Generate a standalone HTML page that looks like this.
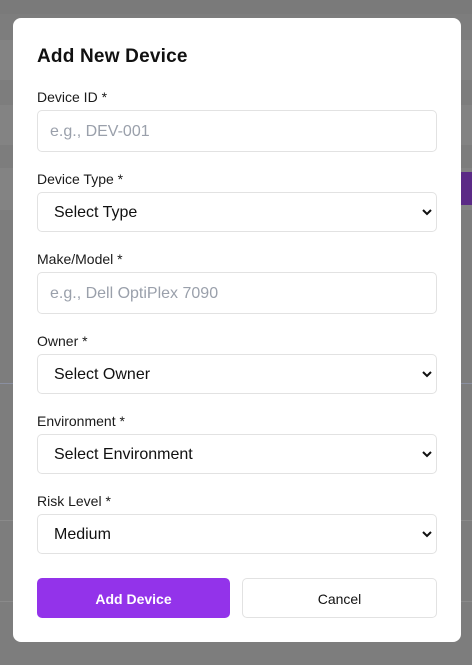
<!DOCTYPE html>
<html><head><style>
*{box-sizing:border-box;margin:0;padding:0}
body{width:472px;height:665px;background:#7d7d7d;font-family:"Liberation Sans",sans-serif;position:relative;overflow:hidden}
.bg{position:absolute;left:0;width:472px;background:#838383}
.modal{position:absolute;left:13px;top:18px;width:448px;height:624px;background:#fff;border-radius:8px}
h2{position:absolute;left:24px;top:28px;font-size:19px;font-weight:bold;color:#111;letter-spacing:0.2px}
.lbl{position:absolute;left:24px;font-size:14px;color:#1a1a1a}
.f{position:absolute;left:24px;width:400px;border:1px solid #e2e2e2;border-radius:5px;font-size:16px;padding-left:16px;padding-top:2px;display:flex;align-items:center}
.ph{color:#9aa0ab;padding-left:12px}
.sel{color:#111}
.sel svg{position:absolute;right:4px;top:50%;margin-top:-4px}
.btn{position:absolute;top:560px;height:40px;border-radius:5px;font-size:14px;display:flex;align-items:center;justify-content:center;padding-top:1px}
</style></head><body>
<div class="bg" style="top:0;height:14px;background:#7a7a7a"></div>
<div class="bg" style="top:40px;height:40px"></div>
<div class="bg" style="top:105px;height:40px"></div>
<div class="bg" style="top:168px;height:42px"></div>
<div style="position:absolute;left:461px;top:172px;width:11px;height:33px;background:#5b2a86"></div>
<div style="position:absolute;left:0;top:383px;width:472px;height:1px;background:#8a8fa0"></div>
<div class="bg" style="top:520px;height:1px;background:#8a8a8a"></div>
<div class="bg" style="top:601px;height:1px;background:#8a8a8a"></div>
<div class="modal">
<h2>Add New Device</h2>
<div class="lbl" style="top:71px">Device ID *</div>
<div class="f ph" style="top:92px;height:42px">e.g., DEV-001</div>
<div class="lbl" style="top:153px">Device Type *</div>
<div class="f sel" style="top:174px;height:40px">Select Type<svg width="10" height="8" viewBox="0 0 10 8"><path d="M1 2l4 4 4-4" stroke="#111" stroke-width="2" fill="none"/></svg></div>
<div class="lbl" style="top:233px">Make/Model *</div>
<div class="f ph" style="top:254px;height:42px">e.g., Dell OptiPlex 7090</div>
<div class="lbl" style="top:315px">Owner *</div>
<div class="f sel" style="top:336px;height:40px">Select Owner<svg width="10" height="8" viewBox="0 0 10 8"><path d="M1 2l4 4 4-4" stroke="#111" stroke-width="2" fill="none"/></svg></div>
<div class="lbl" style="top:395px">Environment *</div>
<div class="f sel" style="top:416px;height:40px">Select Environment<svg width="10" height="8" viewBox="0 0 10 8"><path d="M1 2l4 4 4-4" stroke="#111" stroke-width="2" fill="none"/></svg></div>
<div class="lbl" style="top:475px">Risk Level *</div>
<div class="f sel" style="top:496px;height:40px">Medium<svg width="10" height="8" viewBox="0 0 10 8"><path d="M1 2l4 4 4-4" stroke="#111" stroke-width="2" fill="none"/></svg></div>
<div class="btn" style="left:24px;width:193px;background:#9333ea;color:#fff;font-weight:bold">Add Device</div>
<div class="btn" style="left:229px;width:195px;border:1px solid #e2e2e2;color:#111">Cancel</div>
</div>
</body></html>
